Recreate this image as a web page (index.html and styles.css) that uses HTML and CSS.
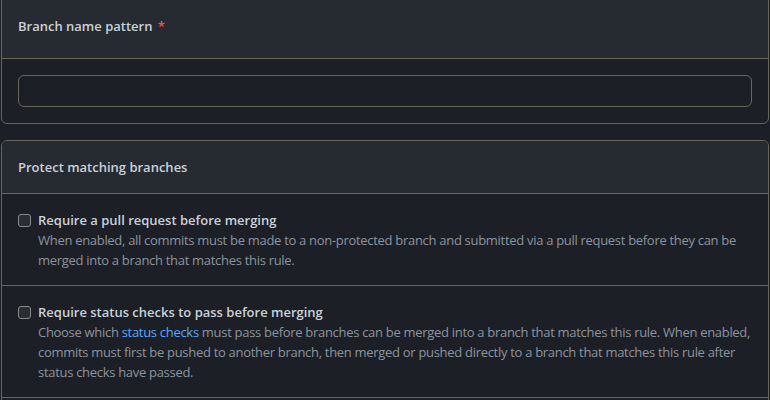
FILE: index.html
```html
<!DOCTYPE html>
<html lang="en">
<head>
<meta charset="utf-8">
<title>Branch protection rule</title>
<link rel="stylesheet" href="styles.css">
</head>
<body>
<div class="page">
  <section class="box box-first">
    <div class="box-header">
      <label class="box-title" for="pattern">Branch name pattern <span class="req">*</span></label>
    </div>
    <div class="box-body">
      <input id="pattern" class="input" type="text">
    </div>
  </section>

  <section class="box">
    <div class="box-header">
      <h3 class="box-title">Protect matching branches</h3>
    </div>
    <div class="row">
      <input class="check" type="checkbox" id="c1">
      <div class="row-text">
        <label class="row-title" for="c1">Require a pull request before merging</label>
        <p class="row-desc">When enabled, all commits must be made to a non-protected branch and submitted via a pull request before they can be merged into a branch that matches this rule.</p>
      </div>
    </div>
    <div class="row">
      <input class="check" type="checkbox" id="c2">
      <div class="row-text">
        <label class="row-title" for="c2">Require status checks to pass before merging</label>
        <p class="row-desc">Choose which <a class="link" href="#">status checks</a> must pass before branches can be merged into a branch that matches this rule. When enabled, commits must first be pushed to another branch, then merged or pushed directly to a branch that matches this rule after status checks have passed.</p>
      </div>
    </div>
    <div class="row">
      <input class="check" type="checkbox" id="c3">
      <div class="row-text">
        <label class="row-title" for="c3">Require conversation resolution before merging</label>
        <p class="row-desc">When enabled, all conversations on code must be resolved before a pull request can be merged into a branch that matches this rule.</p>
      </div>
    </div>
  </section>
</div>
</body>
</html>
```

FILE: styles.css
```css
html, body {
  margin: 0;
  padding: 0;
  background: #1c1f26;
}
body {
  font-family: "Open Sans", "Noto Sans", sans-serif;
  font-size: 13px;
  color: #c9d1d9;
}
.page {
  padding: 0 1px;
}
.box {
  border: 1px solid #6b665a;
  border-radius: 6px;
  background: #1c1f26;
  margin-bottom: 16px;
  overflow: hidden;
}
.box-first {
  margin-top: -7px;
}
.box-header {
  background: #262a31;
  padding: 16px;
  border-bottom: 1px solid #6b665a;
  line-height: 20px;
}
.box-first .box-header {
  padding: 22px 16px 22px;
}
.box-title {
  margin: 0;
  font-size: 13px;
  font-weight: 600;
  color: #c9d1d9;
  display: block;
}
.req {
  color: #f85149;
  margin-left: 2px;
}
.box-body {
  padding: 16px;
}
.input {
  display: block;
  box-sizing: border-box;
  width: 100%;
  height: 32px;
  background: #1c1f26;
  border: 1px solid #6b665a;
  border-radius: 6px;
  color: #c9d1d9;
  padding: 5px 12px;
  font: inherit;
}
.row {
  display: flex;
  gap: 7px;
  padding: 16px 16px 15px;
  border-bottom: 1px solid #6b665a;
}
.row:last-child {
  border-bottom: 0;
}
.check {
  appearance: none;
  -webkit-appearance: none;
  flex: none;
  width: 13px;
  height: 13px;
  margin: 4px 0 0 0;
  border: 1px solid #8b8b8b;
  border-radius: 3px;
  background: #2a2d33;
  box-sizing: border-box;
}
.row-text {
  flex: 1;
  min-width: 0;
}
.row-title {
  display: block;
  font-weight: 600;
  line-height: 20px;
  color: #c9d1d9;
}
.row-desc {
  margin: 0;
  line-height: 20px;
  color: #8b949e;
  letter-spacing: -0.3px;
}
.link {
  color: #58a6ff;
  text-decoration: none;
}
```
